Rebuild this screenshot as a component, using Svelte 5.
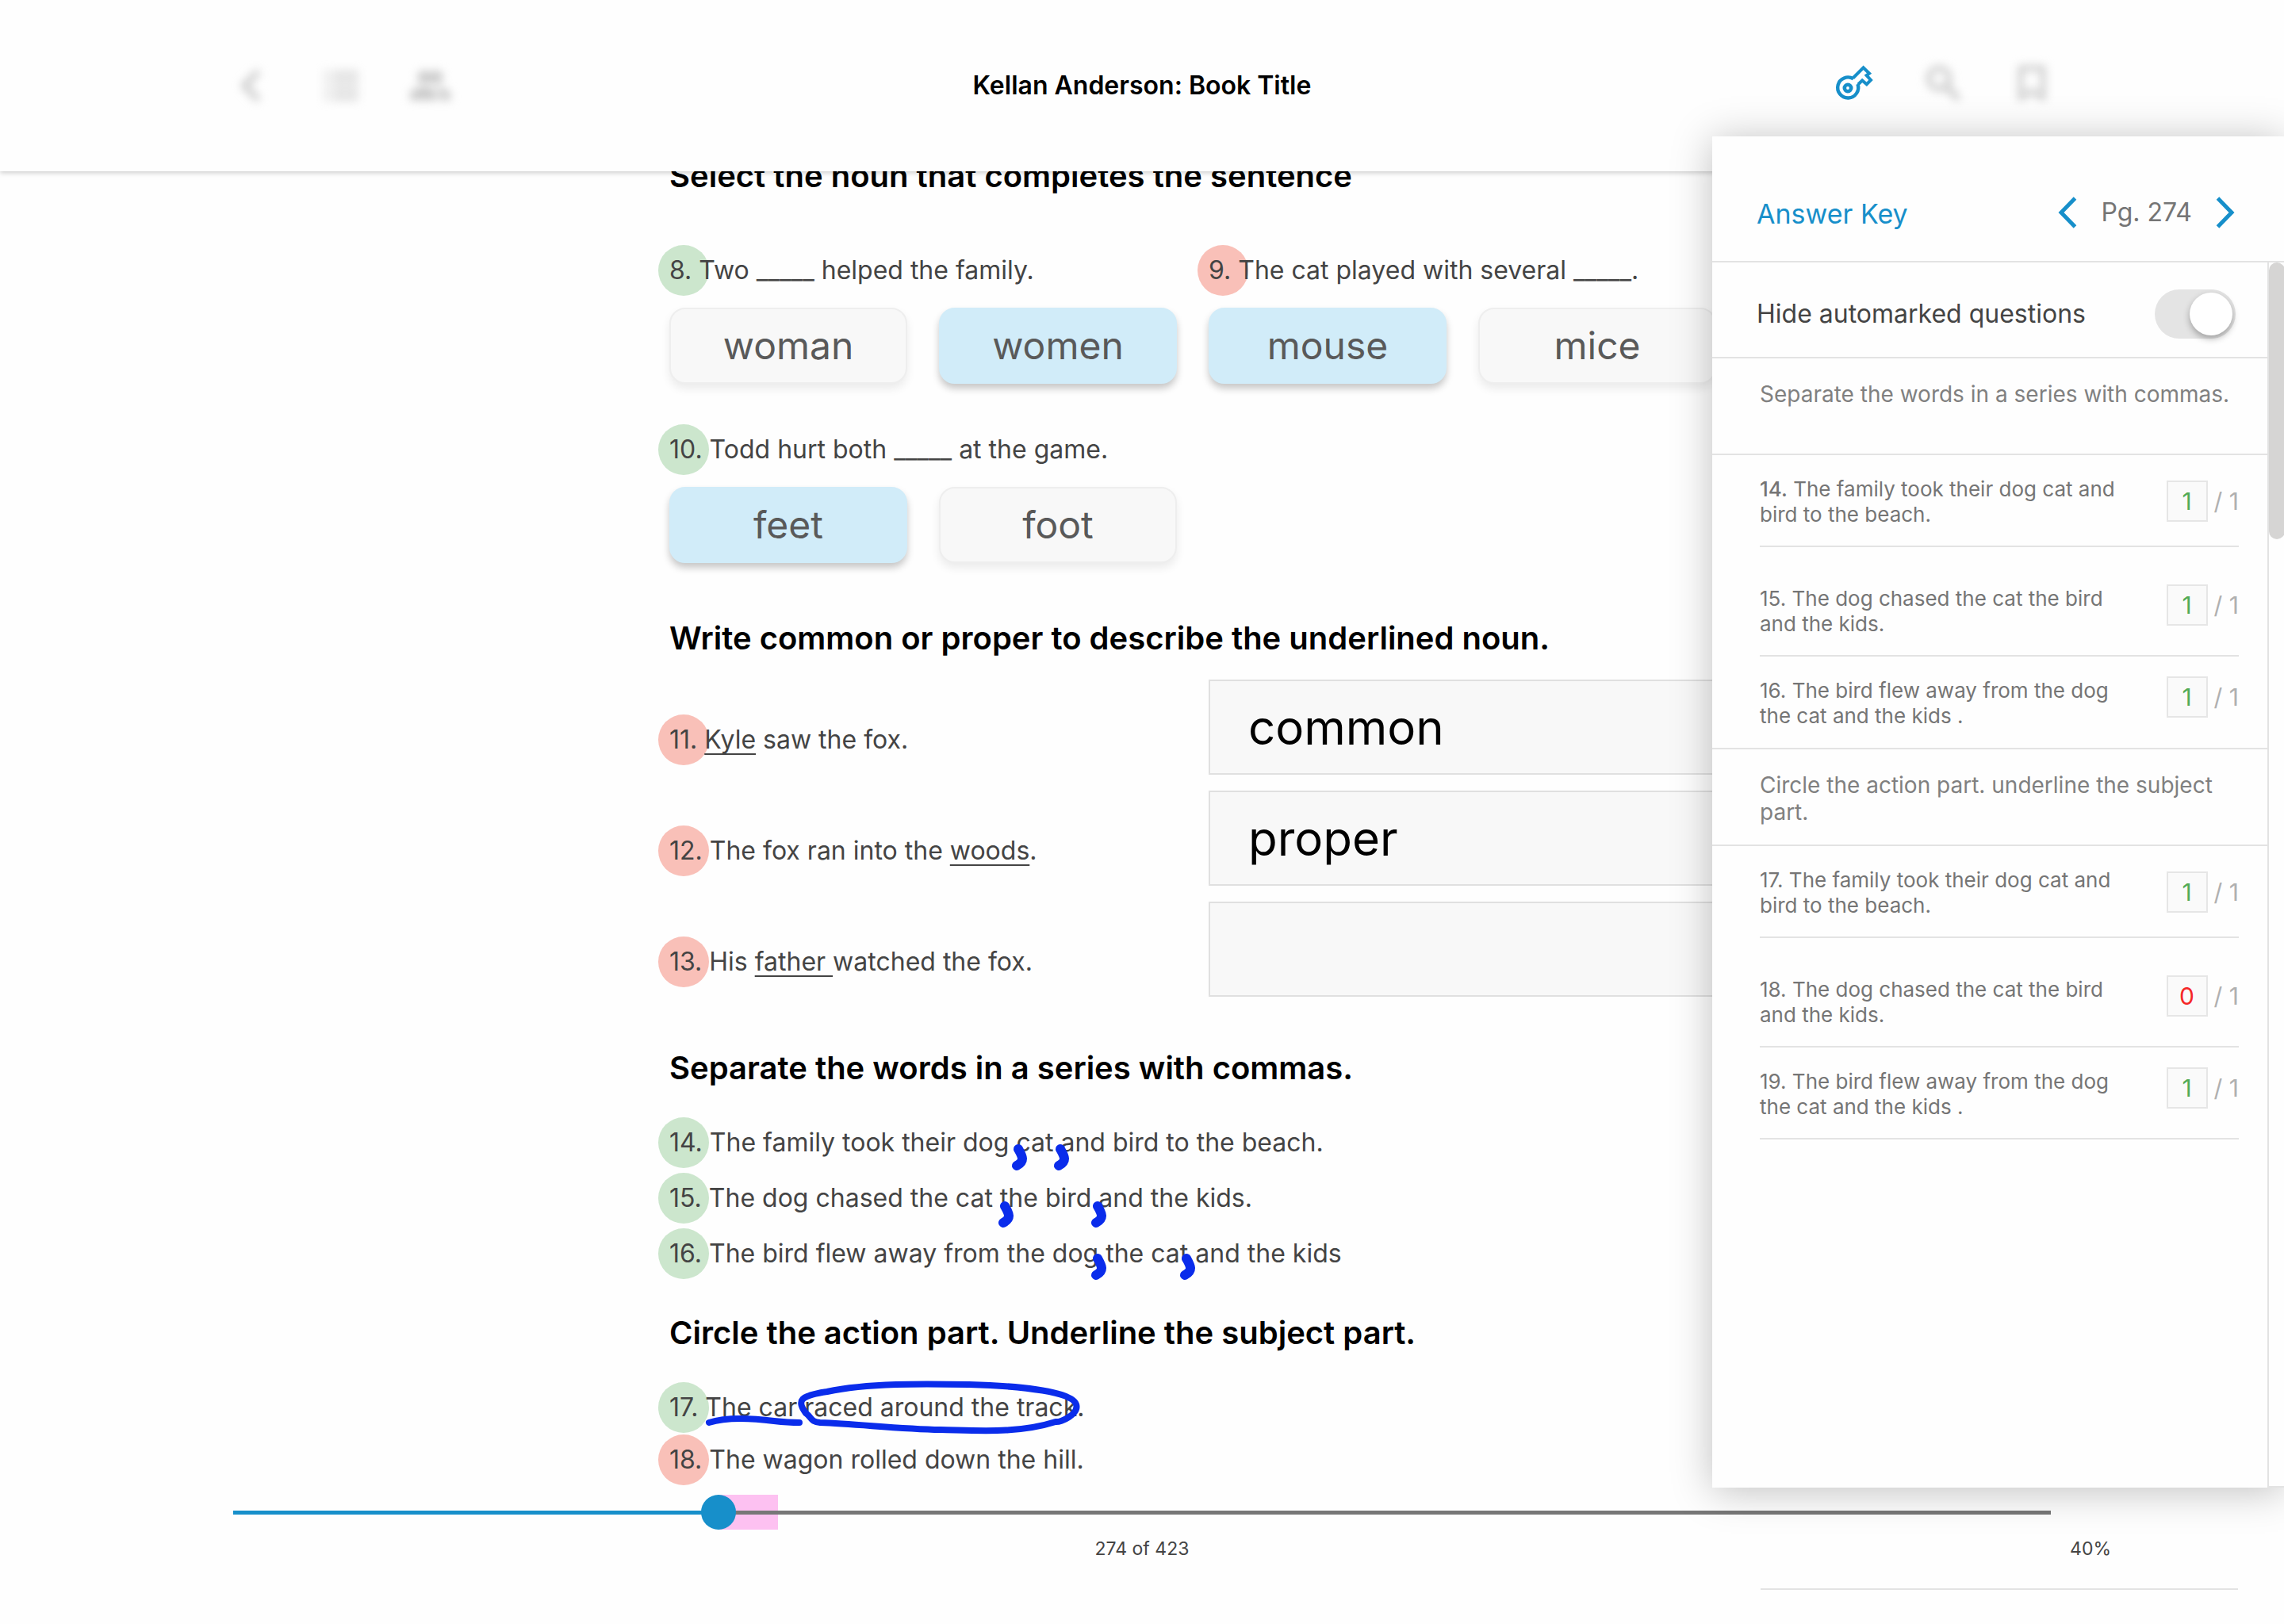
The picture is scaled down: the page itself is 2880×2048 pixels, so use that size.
<script>
  const choiceQuestions = [
    { no: 8, text: 'Two _____ helped the family.', ok: true, options: ['woman', 'women'], picked: 'women' },
    { no: 9, text: 'The cat played with several _____.', ok: false, options: ['mouse', 'mice'], picked: 'mouse' },
    { no: 10, text: 'Todd hurt both _____ at the game.', ok: true, options: ['feet', 'foot'], picked: 'feet' }
  ];

  const nounQuestions = [
    { no: 11, before: '', word: 'Kyle', after: ' saw the fox.', answer: 'common' },
    { no: 12, before: 'The fox ran into the ', word: 'woods', after: '.', answer: 'proper' },
    { no: 13, before: 'His ', word: 'father ', after: 'watched the fox.', answer: '' }
  ];

  const commaQuestions = [
    { no: 14, text: 'The family took their dog cat and bird to the beach.', ok: true },
    { no: 15, text: 'The dog chased the cat the bird and the kids.', ok: true },
    { no: 16, text: 'The bird flew away from the dog the cat and the kids', ok: true }
  ];

  const circleQuestions = [
    { no: 17, text: 'The car raced around the track.', ok: true },
    { no: 18, text: 'The wagon rolled down the hill.', ok: false }
  ];

  const keyGroups = [
    {
      title: 'Separate the words in a series with commas.',
      rows: [
        { no: 14, strong: true, text: 'The family took their dog cat and bird to the beach.', score: 1 },
        { no: 15, text: 'The dog chased the cat the bird and the kids.', score: 1 },
        { no: 16, text: 'The bird flew away from the dog the cat and the kids .', score: 1 }
      ]
    },
    {
      title: 'Circle the action part. underline the subject part.',
      rows: [
        { no: 17, text: 'The family took their dog cat and bird to the beach.', score: 1 },
        { no: 18, text: 'The dog chased the cat the bird and the kids.', score: 0 },
        { no: 19, text: 'The bird flew away from the dog the cat and the kids .', score: 1 }
      ]
    }
  ];

  // Pen strokes for the handwritten commas, in sheet coordinates.
  const commas = [[440, 1233], [493, 1233], [423, 1305], [540, 1305], [540, 1371], [652, 1371]];

  let position = $state(26.25);
  let hideMarked = $state(true);
</script>

<div class="app">
  <header class="topbar">
    <nav class="tools" aria-label="Book">
      <button class="tool faded" aria-label="Back">
        <svg viewBox="0 0 48 48"><path d="M32 6 14 24l18 18" fill="none" stroke="currentColor" stroke-width="7" /></svg>
      </button>
      <button class="tool faded" aria-label="Contents">
        <svg viewBox="0 0 48 48"><path d="M3 5h6v7H3zM13 5h33v7H13zM3 15h6v7H3zM13 15h33v7H13zM3 26h6v7H3zM13 26h33v7H13zM3 36h6v7H3zM13 36h33v7H13z" fill="currentColor" opacity=".6" /></svg>
      </button>
      <button class="tool faded" aria-label="Students">
        <svg viewBox="0 0 48 48"><path d="M17 5a8 8 0 1 1 0 17 8 8 0 0 1 0-17zM32 5a8 8 0 1 1 0 17 8 8 0 0 1 0-17zM-1 42v-6c0-7 11-10 18-10s16 3 16 10v6zM35 27c7 0 15 3 15 9v6H37v-6c0-4-2-7-5-9z" fill="currentColor" /></svg>
      </button>
    </nav>
    <h1>Kellan Anderson: Book Title</h1>
    <nav class="tools right" aria-label="Page">
      <button class="tool active" aria-label="Answer key">
        <svg viewBox="15 12 48 48">
          <path d="M37.5 28.5 50.6 15.4 58 22.6 54.6 25 60 31 54.8 36.2 49.2 31.4 44 36.5" fill="none" stroke="currentColor" stroke-width="4" />
          <path d="M38 29.4A13 13 0 1 0 43.4 36" fill="none" stroke="currentColor" stroke-width="4.4" />
          <circle cx="31" cy="41" r="4.2" fill="none" stroke="currentColor" stroke-width="4.6" />
        </svg>
      </button>
      <button class="tool faded" aria-label="Search">
        <svg viewBox="0 0 48 48"><circle cx="19" cy="17" r="13" fill="none" stroke="currentColor" stroke-width="6" /><path d="m28 27 16 16" stroke="currentColor" stroke-width="7" /></svg>
      </button>
      <button class="tool faded" aria-label="Bookmark">
        <svg viewBox="0 0 48 48"><path d="M10 4h28v37l-14-8-14 8z" fill="none" stroke="currentColor" stroke-width="6" /></svg>
      </button>
    </nav>
  </header>

  <main class="stage">
    <article class="sheet">
      <section>
        <h2>Select the noun that completes the sentence</h2>
        <div class="choices">
          {#each choiceQuestions as q}
            <div class="choice">
              <p class="line"><span class="badge" class:bad={!q.ok}></span>{q.no}. {q.text}</p>
              <div class="options">
                {#each q.options as option}
                  <button class="option" class:picked={option === q.picked} aria-pressed={option === q.picked}>{option}</button>
                {/each}
              </div>
            </div>
          {/each}
        </div>
      </section>

      <section class="nouns">
        <h2>Write common or proper to describe the underlined noun.</h2>
        {#each nounQuestions as q}
          <div class="noun">
            <label class="line" for="noun-{q.no}"><span class="badge bad"></span>{q.no}. {q.before}<u>{q.word}</u>{q.after}</label>
            <input id="noun-{q.no}" type="text" value={q.answer} />
          </div>
        {/each}
      </section>

      <section class="series">
        <h2>Separate the words in a series with commas.</h2>
        {#each commaQuestions as q}
          <p class="line"><span class="badge" class:bad={!q.ok}></span>{q.no}. {q.text}</p>
        {/each}
      </section>

      <section class="parts">
        <h2>Circle the action part. Underline the subject part.</h2>
        {#each circleQuestions as q}
          <p class="line"><span class="badge" class:bad={!q.ok}></span>{q.no}. {q.text}</p>
        {/each}
      </section>

      <svg class="ink" viewBox="0 0 1340 1680" aria-hidden="true">
        {#each commas as [x, y]}
          <path d="M{x} {y}c5 9 9 15-2 21" stroke-width="12" />
        {/each}
        <path d="M50 1578C72 1571 100 1572 132 1576Q150 1578 164 1578" stroke-width="8" />
        <path d="M172 1566C160 1550 165 1544 199 1539C250 1528 320 1529 378 1530C450 1532 508 1540 513 1555C517 1567 494 1578 487 1577C440 1592 390 1588 342 1587C290 1586 240 1580 190 1578C178 1577 180 1572 172 1566Z" stroke-width="8" />
      </svg>
    </article>
  </main>

  <footer class="pager">
    <div class="slider">
      <span class="mark" style="left:{position}%"></span>
      <input type="range" min="0" max="100" step="0.01" aria-label="Page position" bind:value={position} style="--at:{position}%" />
    </div>
    <div class="status">
      <span class="pages">274 of 423</span>
      <span class="percent">40%</span>
    </div>
    <hr />
  </footer>

  <aside class="panel">
    <div class="panel-head">
      <h3>Answer Key</h3>
      <div class="page-nav">
        <button aria-label="Previous page"><svg viewBox="0 0 24 40"><path d="M21.500 2 4 20l17.500 18" /></svg></button>
        <span>Pg. 274</span>
        <button aria-label="Next page"><svg viewBox="0 0 24 40"><path d="M2.500 2 20 20 2.500 38" /></svg></button>
      </div>
    </div>
    <div class="panel-body">
      <div class="scroll-area">
        <label class="toggle">
          <span>Hide automarked questions</span>
          <input type="checkbox" role="switch" bind:checked={hideMarked} />
        </label>
        {#each keyGroups as group}
          <section class="group">
            <h4>{group.title}</h4>
            <ul>
              {#each group.rows as row}
                <li>
                  <label for="score-{row.no}"><span class:strong={row.strong}>{row.no}.</span> {row.text}</label>
                  <div class="score">
                    <input id="score-{row.no}" type="text" class:zero={row.score === 0} value={row.score} />
                    <span>/ 1</span>
                  </div>
                </li>
              {/each}
            </ul>
          </section>
        {/each}
      </div>
      <div class="track"><div class="thumb"></div></div>
    </div>
  </aside>
</div>

<style>
  :global(body) { margin: 0; background: #fff; }
  .app {
    position: relative;
    display: flex;
    flex-direction: column;
    min-height: 100vh;
    overflow: hidden;
    background: #fefefe;
    color: #444;
    font-family: Inter, "Liberation Sans", sans-serif;
    font-size: 32px;
    line-height: 40px;
  }
  .app * { box-sizing: border-box; }
  h1, h2, h3, h4, p, ul { margin: 0; padding: 0; }
  ul { list-style: none; }
  button, input { font: inherit; color: inherit; }
  button { padding: 0; border: 0; background: none; cursor: pointer; }

  .topbar {
    position: relative;
    z-index: 1;
    display: grid;
    grid-template-columns: 1fr auto 1fr;
    align-items: center;
    height: 216px;
    padding: 0 294px;
    background: #fefefe;
    box-shadow: 0 2px 6px rgba(0, 0, 0, .2);
  }
  .topbar h1 { color: #000; font-size: 32px; font-weight: 600; }
  .tools { display: flex; gap: 64px; }
  .tools.right { justify-content: flex-end; padding-bottom: 4px; }
  .tool { width: 48px; height: 48px; }
  .tool svg { display: block; width: 48px; height: 48px; overflow: visible; }
  .faded { color: #c8c8c8; filter: blur(6px); }
  .active { color: #178fca; }

  .stage {
    display: grid;
    grid-template-columns: 844fr 1340px 696fr;
    overflow: hidden;
  }
  .sheet { position: relative; grid-column: 2; margin-top: -18px; padding-bottom: 24px; }
  h2 { color: #000; font-size: 40px; font-weight: 600; line-height: 48px; }
  .line { position: relative; z-index: 0; white-space: pre-wrap; }
  .badge {
    position: absolute;
    z-index: -1;
    top: -12px;
    left: -14px;
    width: 64px;
    height: 64px;
    border-radius: 50%;
    background: #cce6cd;
  }
  .badge.bad { background: #f9c0b8; }

  .choices { display: grid; grid-template-columns: 1fr 1fr; gap: 63px 20px; padding: 75px 0 71px; }
  .options { display: flex; gap: 40px; padding-top: 27px; }
  .option {
    width: 300px;
    height: 96px;
    border: 2px solid #eee;
    border-radius: 20px;
    background: #f8f8f8;
    box-shadow: 0 6px 12px rgba(0, 0, 0, .08);
    color: #595959;
    font-size: 48px;
  }
  .option.picked { border-color: #d1ecf9; background: #d1ecf9; box-shadow: 0 6px 10px rgba(0, 0, 0, .22); }

  .nouns { display: grid; gap: 20px; padding-bottom: 66px; }
  .nouns h2 { padding-bottom: 8px; }
  .noun { display: grid; grid-template-columns: repeat(2, minmax(0, 1fr)); gap: 20px; align-items: center; }
  .noun .line { margin-top: 32px; }
  .noun input {
    width: 100%;
    height: 120px;
    padding: 0 48px;
    border: 2px solid #e0e0e0;
    border-radius: 0;
    background: #f8f8f8;
    color: #000;
    font-size: 60px;
  }
  u { text-decoration-thickness: 2px; text-underline-offset: 6px; text-decoration-skip-ink: none; }

  .series { display: grid; gap: 30px; padding-bottom: 56px; }
  .series h2 { padding-bottom: 20px; }
  .parts { display: grid; gap: 26px; }
  .parts h2 { padding-bottom: 24px; }

  .ink { position: absolute; top: 18px; left: 0; width: 1340px; height: 1680px; overflow: visible; fill: none; stroke: #0a2ceb; stroke-linecap: round; stroke-linejoin: round; pointer-events: none; }

  .pager { padding: 0 294px; font-size: 23px; line-height: 32px; }
  .slider { position: relative; display: flex; }
  .mark { position: absolute; top: 0; width: 75px; height: 44px; margin-left: 10px; background: #fdc1f1; }
  .slider input {
    position: relative;
    appearance: none;
    width: 100%;
    height: 44px;
    margin: 0;
    background: linear-gradient(to right, #178fca var(--at), #777 var(--at)) center / 100% 5px no-repeat;
  }
  .slider input::-webkit-slider-thumb { appearance: none; width: 44px; height: 44px; border-radius: 50%; background: #178fca; }
  .status { display: grid; grid-template-columns: 1fr auto 1fr; padding-top: 8px; margin-right: -76px; margin-left: -76px; }
  .pages { grid-column: 2; }
  .percent { justify-self: end; }
  .pager hr { width: 602px; height: 2px; margin: 34px -236px 0 auto; border: 0; background: #e3e3e3; }

  .panel {
    position: absolute;
    z-index: 2;
    top: 172px;
    right: 0;
    bottom: 172px;
    display: flex;
    flex-direction: column;
    width: 25vw;
    min-width: 721px;
    background: #fefefe;
    box-shadow: 0 4px 48px rgba(0, 0, 0, .25);
    color: #757575;
  }
  .panel-head {
    display: flex;
    justify-content: space-between;
    align-items: center;
    height: 159px;
    padding: 34px 62px 0 56px;
    border-bottom: 2px solid #e3e3e3;
  }
  h3 { padding-top: 5px; color: #178fca; font-size: 34px; font-weight: 400; }
  .page-nav { display: flex; align-items: center; gap: 30px; }
  .page-nav button, .page-nav svg { display: block; width: 24px; height: 40px; }
  .page-nav path { fill: none; stroke: #178fca; stroke-width: 5; }
  .panel-body { display: flex; flex: 1; }
  .scroll-area { flex: 1; }
  .track { width: 21px; border: 2px solid #e3e3e3; border-width: 0 0 2px 2px; }
  .thumb { width: 20px; height: 349px; border-radius: 10px; background: #d6d5d4; }

  .toggle {
    display: flex;
    justify-content: space-between;
    align-items: center;
    height: 121px;
    padding: 10px 40px 0 56px;
    border-bottom: 2px solid #e3e3e3;
    color: #444;
  }
  .toggle input {
    appearance: none;
    display: flex;
    align-items: center;
    width: 102px;
    height: 62px;
    margin: 0;
    padding: 4px;
    border-radius: 31px;
    background: #e4e4e4;
  }
  .toggle input::before { content: ""; width: 54px; height: 54px; border-radius: 50%; background: #fff; box-shadow: 0 4px 8px rgba(0, 0, 0, .3); }
  .toggle input:checked { justify-content: flex-end; }

  h4 {
    min-height: 122px;
    padding: 28px 40px 24px 60px;
    border-bottom: 2px solid #e3e3e3;
    color: #808080;
    font-size: 28px;
    font-weight: 400;
    line-height: 34px;
  }
  .group:not(:last-child) { border-bottom: 2px solid #e3e3e3; }
  .group li {
    display: flex;
    justify-content: space-between;
    margin: 0 36px 0 60px;
    padding: 27px 0 23px;
    border-bottom: 2px solid #e3e3e3;
    font-size: 26px;
    line-height: 32px;
  }
  .group li:nth-child(2) { padding-top: 49px; }
  .group:not(:last-child) li:last-child { padding-bottom: 24px; border-bottom: 0; }
  .group li:first-child { align-items: center; }
  .group li label { width: 460px; }
  .strong { font-weight: 500; }
  .score { display: flex; align-items: center; gap: 8px; height: 52px; margin-top: -2px; color: #b0b0b0; font-size: 30px; }
  .score input {
    width: 52px;
    height: 52px;
    padding: 0;
    border: 2px solid #e6e6e6;
    border-radius: 0;
    background: #fafafa;
    color: #52ab56;
    text-align: center;
  }
  .score input.zero { color: #f52727; }
</style>
